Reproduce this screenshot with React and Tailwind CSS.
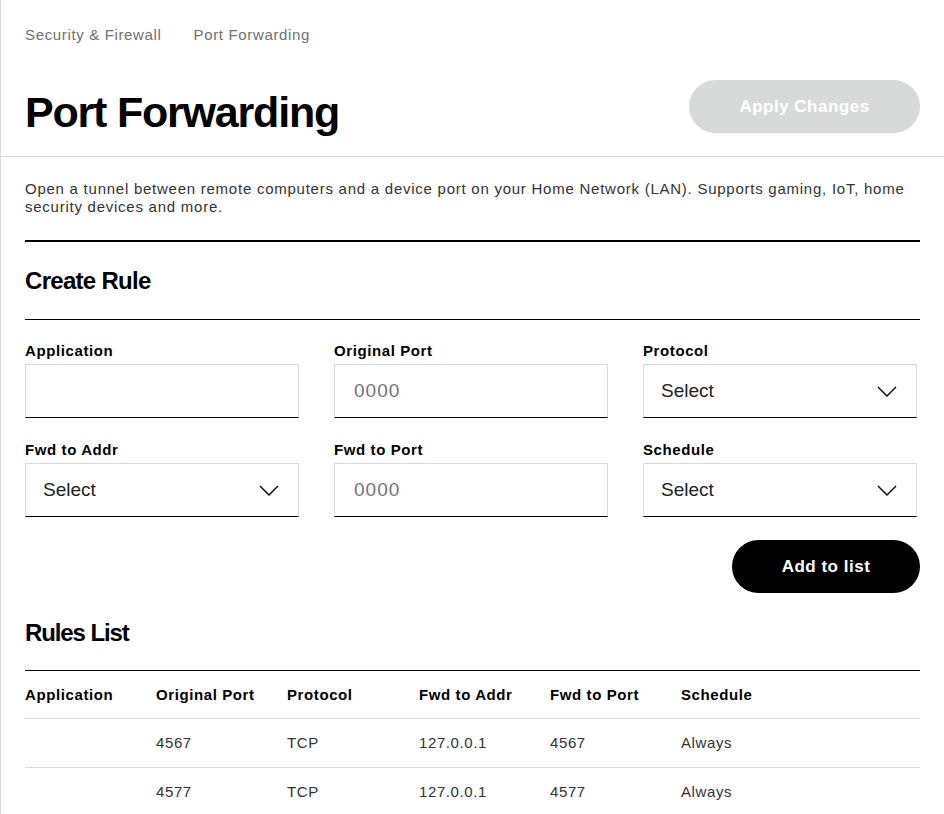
import React from 'react'

const Chevron = () => (
  <svg width="20" height="11" viewBox="0 0 20 11" fill="none" className="shrink-0">
    <path d="M1 1L10 10L19 1" stroke="#000" strokeWidth="1.4" />
  </svg>
)

const Label = ({ children }) => (
  <div className="text-[15px] leading-[18px] font-bold tracking-[0.6px] text-black">{children}</div>
)

const TextField = ({ placeholder }) => (
  <div className="h-[54px] border border-[#d8dada] border-b-black flex items-center pl-[19px]">
    <span className="text-[19px] tracking-[1px] text-[#747676]">{placeholder}</span>
  </div>
)

const SelectField = () => (
  <div className="h-[54px] border border-[#d8dada] border-b-black flex items-center justify-between pl-[17px] pr-[19px]">
    <span className="text-[19px] text-[#222]">Select</span>
    <Chevron />
  </div>
)

const Field = ({ label, children }) => (
  <div className="flex flex-col gap-1">
    <Label>{label}</Label>
    {children}
  </div>
)

const rules = [
  { app: '', port: '4567', proto: 'TCP', addr: '127.0.0.1', fwdPort: '4567', sched: 'Always' },
  { app: '', port: '4577', proto: 'TCP', addr: '127.0.0.1', fwdPort: '4577', sched: 'Always' },
]

const cols = 'grid grid-cols-[131px_131px_132px_131px_131px_1fr] items-center'

export default function App() {
  return (
    <div className="min-h-screen bg-white border-l border-[#d8dada] font-['Liberation_Sans',Arial,sans-serif] text-black">
      {/* Header */}
      <div className="h-[157px] border-b border-[#d8dada] pl-6 pr-6 pt-[26px]">
        <div className="flex gap-8 text-[15px] leading-[18px] tracking-[0.65px] text-[#6f7171]">
          <span>Security &amp; Firewall</span>
          <span>Port Forwarding</span>
        </div>
        <div className="mt-[36px] flex justify-between items-start">
          <h1 className="mt-[8px] text-[43px] leading-[48px] font-bold tracking-[-1.2px]">Port Forwarding</h1>
          <button className="h-[53px] w-[231px] rounded-full bg-[#d8dada] text-white text-[17px] font-bold tracking-[0.5px] pt-px">
            Apply Changes
          </button>
        </div>
      </div>

      <div className="pl-6 pr-6">
        <p className="pt-[23px] text-[15px] leading-[18px] tracking-[0.75px] text-[#333]">
          Open a tunnel between remote computers and a device port on your Home Network (LAN). Supports gaming, IoT, home security devices and more.
        </p>

        <div className="mt-[24px] border-t-2 border-black" />

        {/* Create Rule */}
        <h2 className="mt-[25px] text-[24px] leading-[28px] font-bold tracking-[-0.7px]">Create Rule</h2>
        <div className="mt-[24px] border-t border-black" />

        <div className="mt-[22px] grid grid-cols-[274px_274px_274px] gap-x-[35px] gap-y-[23px]">
          <Field label="Application"><TextField placeholder="" /></Field>
          <Field label="Original Port"><TextField placeholder="0000" /></Field>
          <Field label="Protocol"><SelectField /></Field>
          <Field label="Fwd to Addr"><SelectField /></Field>
          <Field label="Fwd to Port"><TextField placeholder="0000" /></Field>
          <Field label="Schedule"><SelectField /></Field>
        </div>

        <div className="mt-[23px] flex justify-end">
          <button className="h-[53px] w-[188px] rounded-full bg-black text-white text-[17px] font-bold tracking-[0.5px] pt-px">
            Add to list
          </button>
        </div>

        {/* Rules List */}
        <h2 className="mt-[26px] text-[24px] leading-[28px] font-bold tracking-[-1.1px]">Rules List</h2>
        <div className="mt-[23px] border-t border-black" />

        <div className={`${cols} h-[48px] pt-[2px] border-b border-[#d8dada] text-[15px] font-bold tracking-[0.6px]`}>
          <span>Application</span>
          <span>Original Port</span>
          <span>Protocol</span>
          <span>Fwd to Addr</span>
          <span>Fwd to Port</span>
          <span>Schedule</span>
        </div>
        {rules.map((r, i) => (
          <div key={i} className={`${cols} h-[49px] border-b border-[#d8dada] text-[15px] tracking-[0.6px] text-[#333]`}>
            <span>{r.app}</span>
            <span>{r.port}</span>
            <span>{r.proto}</span>
            <span>{r.addr}</span>
            <span>{r.fwdPort}</span>
            <span>{r.sched}</span>
          </div>
        ))}
      </div>
    </div>
  )
}
